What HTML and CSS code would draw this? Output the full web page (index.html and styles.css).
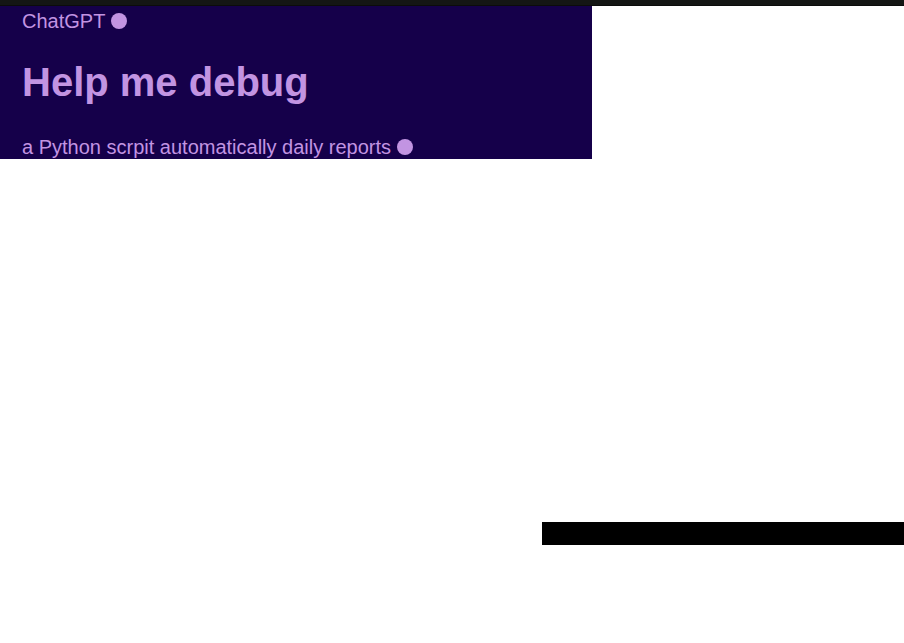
FILE: index.html
```html
<!DOCTYPE html>
<html lang="en">
<head>
<meta charset="utf-8">
<title>ChatGPT</title>
<link rel="stylesheet" href="styles.css">
</head>
<body>
<div class="topbar"></div>
<header class="hero">
  <div class="brand">ChatGPT <span class="dot"></span></div>
  <h1 class="title">Help me debug</h1>
  <div class="subtitle">a Python scrpit automatically daily reports <span class="dot"></span></div>
</header>
<div class="strip"></div>
</body>
</html>
```
FILE: styles.css
```css
html, body {
  margin: 0;
  padding: 0;
  background: #ffffff;
}
body {
  font-family: "Liberation Sans", Arial, sans-serif;
  width: 904px;
  height: 643px;
  overflow: hidden;
}
.topbar {
  height: 5px;
  background: #141614;
  border-bottom: 1px solid #0b0c0b;
}
.hero {
  width: 592px;
  height: 153px;
  box-sizing: border-box;
  padding: 4px 0 0 22px;
  background: #15004a;
  color: #c294e2;
  overflow: hidden;
}
.brand {
  font-size: 20px;
  line-height: 23px;
}
.title {
  margin: 26px 0 0 0;
  font-size: 40px;
  line-height: 46px;
  font-weight: bold;
}
.subtitle {
  margin-top: 31px;
  font-size: 20px;
  line-height: 23px;
  white-space: nowrap;
}
.dot {
  display: inline-block;
  width: 16px;
  height: 16px;
  border-radius: 50%;
  background: #c294e2;
  vertical-align: -1px;
}
.strip {
  margin: 363px 0 0 542px;
  height: 23px;
  background: #000000;
}
```
